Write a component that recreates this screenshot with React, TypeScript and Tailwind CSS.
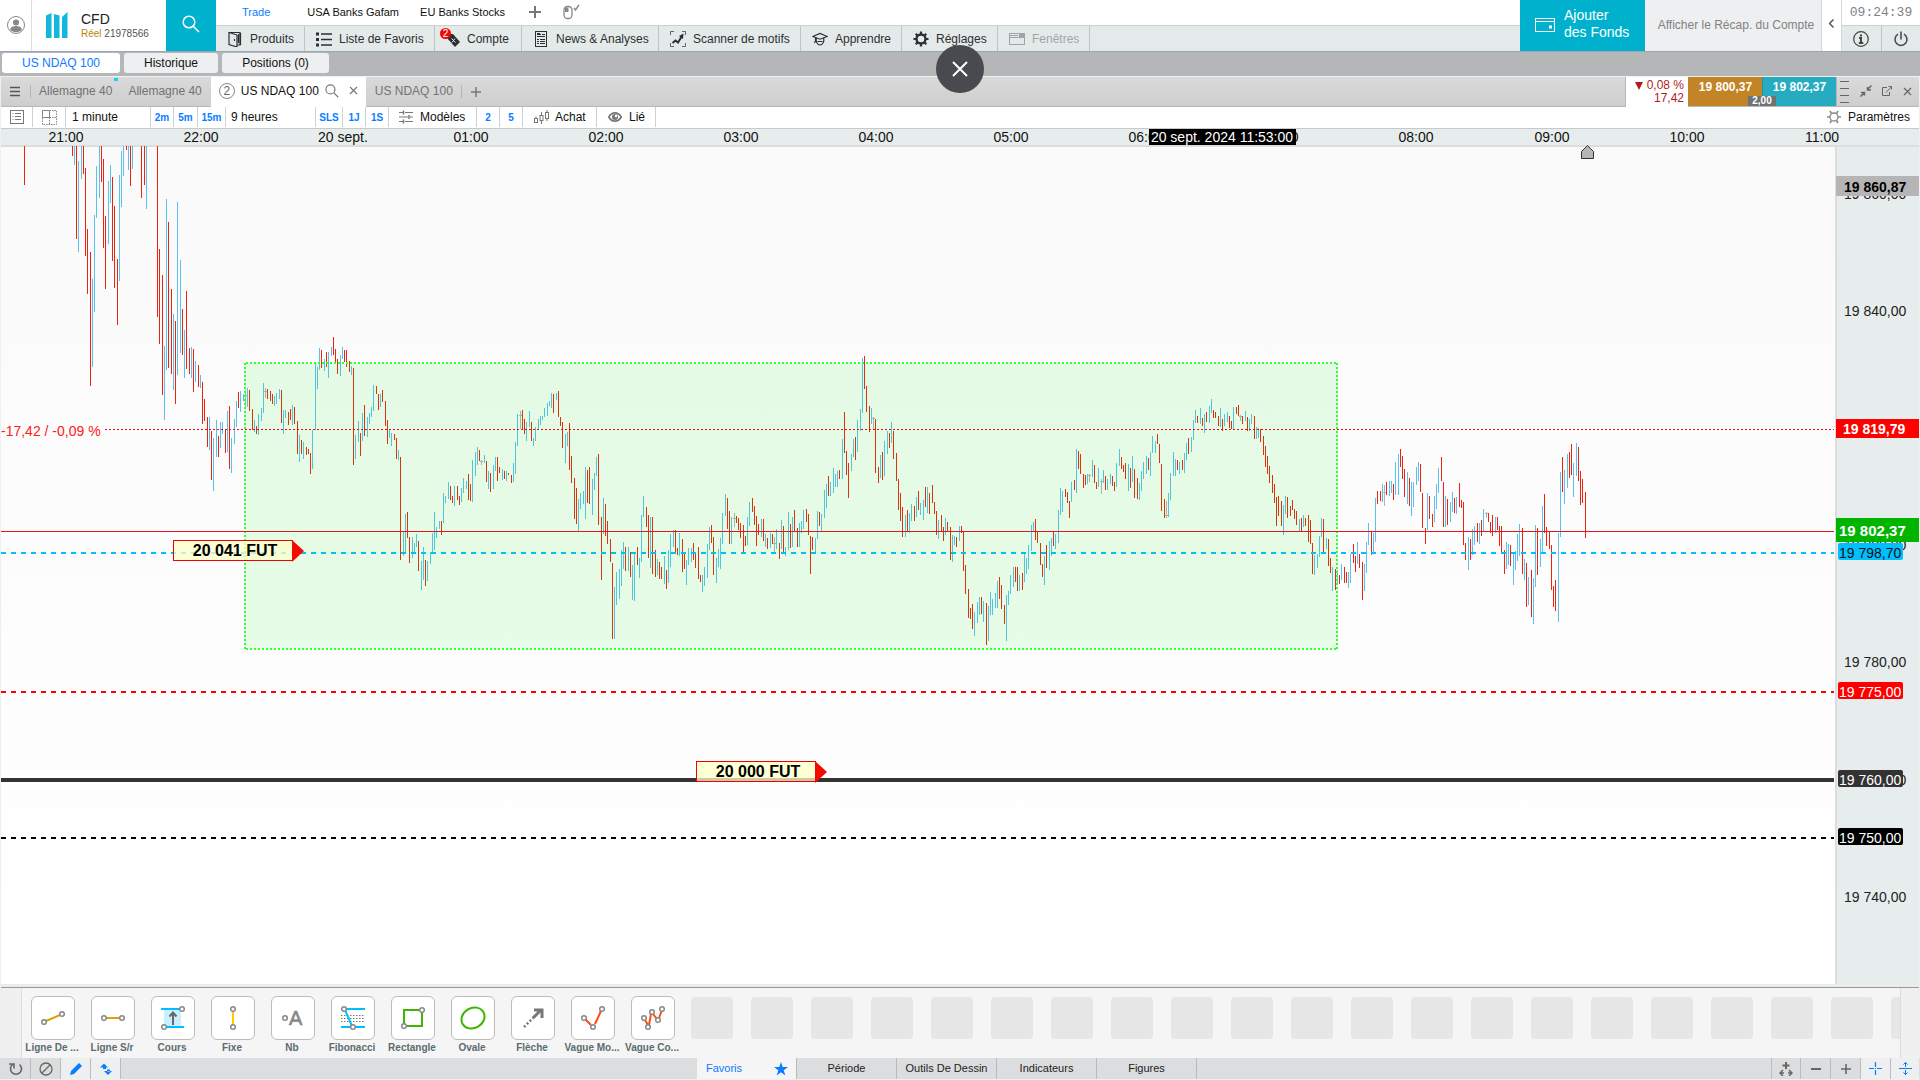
import React from 'react';

/* ------------------------------------------------------------------ */
/* Price data                                                          */
/* ------------------------------------------------------------------ */

// Each bar is "<kind><x> <top> <bottom> [tick]" in sub-units (3 per pixel) from its block's origin.
// r = down, b = up, g = unchanged (drawn with a small cross tick).
const BLOCKS: { x: number; y: number; bars: string }[] = [
  {
    x: 0,
    y: 140,
    bars:
      'r73 18 135,r217 18 47,b223 18 75,r229 18 297,b235 63 336,b244 18 117,r250 18 102,r256 84 348,r262 267 462,r271 336 738,b277 417 681,b283 225 516,b289 78 234,b298 18 174,r304 18 126,r310 57 324,r316 228 447,b325 123 312,b331 75 189,r337 111 363,r343 198 444,r352 357 555,b358 105 423,b364 33 201,b370 18 108,r379 18 30,b385 18 90,r391 18 138,b397 18 87,r424 18 174,r433 18 135,b439 18 207,r472 18 531,r478 327 612,r487 405 765,b493 618 840,b499 177 690,r505 246 684,r514 447 702,b520 522 750,r526 543 792,b532 186 705,b541 360 639,r547 507 645,b553 570 714,r559 453 687,r568 624 702,b574 621 714,r580 627 756,b586 663 726,r595 675 741,b601 705 744,r607 726 852,r613 777 843,r622 831 921,b628 831 930,r634 873 1020,b640 894 1053,b649 840 951,r655 888 951,b661 846 924,b667 846 882,r676 870 939,b682 813 936,r688 798 987,b694 894 999,b703 837 912,b709 783 861,r715 756 804,b721 753 816,b730 762 783,g736 750 800 767,b742 744 801,r748 750 813,r757 807 870,b763 840 876,r769 858 882,b775 822 885,b784 804 843,b790 729 819,g796 744 774 754,r802 747 777,r811 753 783,r817 762 792,b823 768 798,b829 759 792,b838 747 777,r844 750 849,b850 810 882,b856 810 834,r865 816 855,r871 807 840,b877 795 855,r883 801 852,r892 843 942,b898 885 966,r904 900 942,b910 906 957,r919 921 945,r925 927 942,r931 939 1002,b937 870 987,b946 672 870,b952 681 747,b958 624 690,r964 630 684,b973 657 693,r979 636 681,b985 636 714,b994 621 648,r1000 591 645,r1006 627 666,r1012 657 702,b1021 645 708,b1027 621 657,r1033 630 666,r1039 630 681,r1048 663 696,b1054 678 705,r1060 684 975,b1066 885 957,b1075 843 906,r1081 879 948,b1087 819 903,r1093 795 888,b1102 831 891,b1108 819 852,b1114 801 831,b1120 735 813,r1129 738 762,r1135 762 810,b1141 762 801,r1147 750 786,r1156 783 858,r1162 840 912,b1168 867 894,b1174 879 918,r1183 882 900,r1189 894 957,b1195 930 960,r1201 951 1260,b1210 1173 1248,b1216 1122 1239,r1222 1116 1194,r1228 1191 1269,b1237 1191 1254,b1243 1209 1239,b1249 1182 1221,r1255 1203 1293,b1264 1263 1350,b1270 1221 1321,r1276 1260 1338,b1282 1263 1323,b1291 1236 1272,b1297 1179 1242,b1303 1116 1230,b1309 1161 1194,b1318 1143 1167',
  },
  {
    x: 440,
    y: 340,
    bars:
      'r4 543 585,b10 459 549,b16 468 489,b25 426 477,r31 438 480,r37 468 489,b43 438 498,r52 438 480,r58 468 495,b64 444 486,b70 414 459,b79 423 447,r85 402 480,r91 432 483,b97 360 486,b106 336 408,b112 321 375,r118 330 363,g124 360 375 364,b133 345 369,r139 363 426,b145 393 447,r151 399 456,b160 375 447,b166 351 393,r172 351 423,r178 381 399,b187 387 420,r193 393 417,b199 393 423,r205 399 405,r214 405 429,b220 369 426,b226 306 402,b232 222 318,g241 213 267 226,r247 210 267,r253 237 282,b259 246 303,b268 213 261,r274 246 303,b280 294 318,b286 261 303,b295 237 270,b301 228 255,b307 228 240,b313 204 231,b322 189 228,b328 183 198,b334 159 204,r340 162 219,b349 159 180,r355 153 231,r361 231 258,r367 246 324,b376 282 369,b382 276 318,r388 249 390,r394 348 429,r403 414 537,r409 444 552,b415 477 573,b421 459 507,b430 453 492,b436 381 537,r442 390 489,r448 381 492,b457 417 525,b463 399 450,b469 351 408,r475 342 555,r484 531 720,b490 474 582,r496 492 588,r502 543 612,r511 597 666,r517 669 897,b523 741 897,b529 696 795,b538 687 777,b544 630 738,b550 606 687,r556 621 693,b565 621 693,r571 636 711,b577 675 780,b583 639 783,r592 621 675,b598 654 714,b604 525 666,b610 468 531,r619 501 561,r625 525 654,b631 531 684,r637 531 702,r646 630 711,b652 657 705,r658 666 717,r664 681 717,b673 648 732,r679 690 747,b685 630 729,b691 582 681,b700 570 621,r706 570 639,r712 624 645,b718 579 648,r727 597 696,r733 642 687,b739 660 735,b745 624 675,b754 624 666,r760 609 660,r766 642 684,r775 621 717,r781 705 726,b787 705 756,b793 681 738,b802 612 714,b808 561 630,r814 555 609,r820 591 705,b829 654 729,b835 627 681,b841 594 687,b847 519 612,b856 462 528,r862 474 567,r868 513 612,b874 531 612,g883 519 561 535,r889 528 549,r895 534 570,r901 549 594,r910 555 636,r916 588 618,b922 531 615,b928 486 558,r937 474 516,r943 498 555,r949 528 618,r955 552 585,b964 537 591,r970 537 603,b976 582 621,r982 594 627,b991 579 624,r997 582 612,g1003 591 636 609,b1009 567 627,r1018 609 657,b1024 540 627,r1030 558 639,b1036 621 648,b1045 516 630,r1051 552 624,b1057 531 621,r1063 510 573,r1072 564 621,b1078 549 621,b1084 543 579,b1090 510 567,r1099 507 546,r1105 522 585,r1111 588 702,r1117 591 630,b1126 594 639,b1132 513 597,r1138 516 558,b1144 522 573,b1153 450 534,b1159 432 504,r1165 408 468,b1171 426 468,b1180 384 459,b1186 402 441,b1192 393 441,r1198 390 417,b1207 297 417,r1213 216 339,r1219 333 405,r1225 369 474,b1234 342 393,b1240 297 351,r1246 291 360,b1252 240 336,b1261 207 273,b1267 54 219,r1273 48 147,r1279 138 216,r1288 198 276,b1294 204 252,g1300 231 270 235,r1306 237 399,r1315 381 429,b1321 345 414,r1327 336 420,b1333 303 408,b1342 273 342,r1348 279 324,b1354 246 309,r1360 273 357,r1369 339 423,r1375 417 510',
  },
  {
    x: 900,
    y: 340,
    bars:
      'r1 459 543,r7 501 591,b16 525 591,r22 510 573,b28 519 579,b34 492 543,r43 498 543,b49 471 531,r55 453 510,b61 489 525,b70 480 540,r76 441 501,b82 441 519,r88 459 522,r97 435 489,r103 486 522,r109 513 585,b115 540 597,r124 525 573,r130 561 603,b136 534 585,r142 546 573,r151 561 660,b157 585 666,b163 588 615,r169 591 621,b178 558 603,r184 558 579,r190 576 693,r196 675 762,r205 747 834,r211 804 837,r217 792 867,b223 816 888,b232 786 849,b238 771 825,r244 771 822,b250 783 846,r259 789 915,b265 798 903,b271 756 825,b277 777 825,b286 759 804,b292 723 804,r298 711 777,r304 735 807,r313 795 852,b319 765 903,b325 753 795,b331 705 762,b340 681 741,r346 681 726,r352 681 753,b358 705 753,r367 699 750,b373 639 726,b379 654 702,b385 615 687,b394 555 633,b400 546 573,r406 537 600,r412 576 609,r421 609 675,r427 672 711,b433 648 735,r439 615 684,b448 603 690,b454 594 648,r460 573 618,b466 582 627,b475 510 609,b481 444 525,b487 453 516,r496 447 471,r502 456 489,r508 483 534,b514 426 486,r523 420 450,b529 327 459,r535 333 387,r541 342 402,r550 402 444,r556 405 435,b562 402 432,g568 402 426 406,b577 360 411,r583 375 429,r589 426 447,b595 384 441,g604 417 462 424,b610 390 429,r616 408 450,b622 417 450,b631 402 432,r637 408 438,r643 426 453,b649 369 441,b658 327 378,r664 351 387,r670 375 396,r676 369 417,b685 372 453,r691 384 444,b697 348 426,r703 387 474,r712 414 477,b718 429 480,b724 393 453,b730 366 417,b739 348 402,r745 354 390,b751 336 408,b757 288 339,b766 303 339,r772 282 312,r778 312 369,r784 372 513,r793 477 534,g799 483 534 526,b805 459 531,b811 399 480,b820 336 408,b826 357 408,r832 360 390,b838 366 402,r847 360 390,b853 339 399,b859 309 360,r865 294 342,b874 291 336,b880 240 300,b886 210 249,r892 228 249,b901 204 252,r907 234 258,b913 222 279,r919 216 246,b928 198 249,b934 177 219,r940 210 234,r946 216 234,r955 228 258,b961 204 261,r967 237 273,b973 222 258,b982 216 246,r988 228 264,r994 243 267,b1000 201 270,r1009 201 222,r1015 195 228,g1021 225 243 229,r1027 228 252,b1036 213 243,r1042 231 273,b1048 237 273,b1054 222 252,r1063 228 297,b1069 261 297,b1075 264 294,r1081 267 306,r1090 288 345,r1096 318 381,r1102 348 402,r1108 378 429,r1117 405 459,r1123 432 489,r1129 471 558,r1135 468 528,r1144 483 558,b1150 495 585,b1156 468 522,r1162 471 534,r1171 498 528,r1177 480 510,r1183 507 537,r1189 513 555,b1198 537 573,r1204 534 573,b1210 525 561,r1216 534 558',
  },
  {
    x: 1300,
    y: 400,
    bars:
      'r25 345 426,r31 360 432,r37 429 522,b43 465 525,b52 462 504,b58 408 471,b64 354 411,r70 357 459,b79 414 447,r85 417 498,r91 474 519,b97 501 573,r106 507 570,b112 510 550,r118 525 552,b124 492 540,r133 501 549,r139 516 549,b145 516 564,b151 462 549,r160 432 489,r166 468 516,b172 426 492,r178 462 504,r187 486 600,b193 492 573,b199 426 519,b205 369 435,r214 393 465,b220 399 462,b226 294 426,r232 273 312,r241 273 303,b247 252 306,g253 255 318 277,r259 246 285,b268 243 288,b274 243 279,r280 252 300,b286 186 285,b295 162 285,r301 147 201,r307 168 237,r313 207 291,b322 216 312,r328 234 318,b334 246 348,b340 246 321,b349 201 255,b355 186 243,r361 192 276,r367 279 384,r376 384 432,b382 279 390,r388 288 357,r397 342 381,b403 288 366,b409 252 327,b415 204 279,r424 171 243,r430 246 381,b436 288 381,r442 297 375,b451 306 366,b457 276 336,r463 294 339,b469 291 342,r478 249 321,r484 300 324,r490 306 435,r496 429 480,b505 411 510,r511 417 480,b517 387 465,b523 378 435,r532 369 426,b538 369 432,r544 360 408,b550 327 396,g559 336 354 340,r565 339 366,r571 366 399,r577 345 408,b586 351 399,r592 351 390,r598 378 438,r604 378 462,r613 450 522,b619 426 507,b625 432 495,r631 435 498,b640 459 555,b646 453 510,b652 402 483,b658 372 468,r667 384 522,b673 477 540,r679 489 621,b685 531 615,r694 510 651,b700 534 672,b706 375 561,r712 384 525,b721 417 501,b727 318 456,r733 282 399,r739 381 438,r748 396 447,r754 435 570,r760 558 621,r766 540 633,b775 399 666,b781 216 411,r787 171 276,b793 210 312,b802 162 264,r808 156 234,r814 132 225,b820 189 291,b829 129 228,r835 141 243,r841 213 315,r847 237 309,r856 276 414',
  },
];

const BAR_COLORS: Record<string, string> = { r: '#ee2211', b: '#5cc0ee', g: '#b4b4b4' };

const BARS = BLOCKS.flatMap((block) =>
  block.bars.split(',').map((entry) => {
    const [x, top, bottom, tick] = entry.slice(1).split(' ').map(Number);
    return {
      color: BAR_COLORS[entry[0]],
      x: block.x + Math.floor(x / 3),
      y: block.y + Math.round(top / 3),
      h: Math.max(1, Math.round((bottom - top) / 3)),
      tick: tick === undefined ? null : block.y + Math.floor(tick / 3),
    };
  }),
);

/* ------------------------------------------------------------------ */
/* Icons                                                               */
/* ------------------------------------------------------------------ */

type IconProps = { children: React.ReactNode; w?: number; h?: number; className?: string };

function Svg({ children, w = 16, h = 16, className = '' }: IconProps) {
  return (
    <svg
      width={w}
      height={h}
      viewBox={`0 0 ${w} ${h}`}
      fill="none"
      stroke="currentColor"
      className={`shrink-0 ${className}`}
      aria-hidden="true"
    >
      {children}
    </svg>
  );
}

const BookIcon = () => (
  <Svg>
    <path d="M2 1.5h11v12.5h-3M10 4v12L2 13.5V1.5L10 4M11.5 3v9" strokeWidth="1.2" />
    <path d="M13.5 2v12M7.500 8v2" strokeWidth="1.200" />
  </Svg>
);
const ListIcon = () => (
  <Svg>
    <path d="M5 3h11M5 8.500h11M5 14h11" strokeWidth="1.5" />
    <path d="M0 3h3M0 8.500h3M0 14h3" strokeWidth="3" />
  </Svg>
);
const TagIcon = () => (
  <Svg className="-ml-0.5">
    <path d="M3 3h6l7 8-5 5-8-9z" fill="currentColor" stroke="none" />
    <path d="M7.500 7.500l4 4M11 7.500l-3 4" stroke="#e4eae9" />
  </Svg>
);
const NewsIcon = () => (
  <Svg>
    <rect x="2.500" y="0.500" width="11" height="15" />
    <path d="M4 3.500h4M9 3.500h3M4 5.500h8M4 8.500h2M7 8.500h5M4 10.500h2M7 10.500h5M4 12.500h2M7 12.500h5" />
    <path d="M4 3h3" strokeWidth="2" />
  </Svg>
);
const ScanIcon = () => (
  <Svg>
    <path d="M.5 4V.5H4M12 .5h3.500V4M.5 12v3.500H4M12 15.500h3.500V12" opacity=".7" />
    <path d="M2.500 12l3-2.500 2.500 2 4-6.500" strokeWidth="2" />
    <path d="M9 5l4.500-2.500L13 8z" fill="currentColor" stroke="none" />
  </Svg>
);
const LearnIcon = () => (
  <Svg>
    <path d="M.8 5.500L8 2.500l7.200 3L8 8.200zM3.500 7v3M4.500 7c-1 3 .5 7 3.500 7s4.500-4 3.500-7M5.500 10.500h5M3.500 10l-1 2" strokeWidth="1.200" />
  </Svg>
);
const GearIcon = () => (
  <Svg>
    <circle cx="8" cy="8" r="4.500" strokeWidth="2.400" />
    <path d="M8 .5v3M8 12.500v3M.5 8h3M12.500 8h3M2.700 2.700l2 2M11.300 11.300l2 2M2.700 13.300l2-2M11.300 4.700l2-2" strokeWidth="2.200" />
  </Svg>
);
const WindowIcon = () => (
  <Svg>
    <rect x=".5" y="2.500" width="15" height="11" />
    <path d="M1 4.500h8M1 6.500h14" />
    <path d="M10 4.500h5" strokeWidth="3" />
  </Svg>
);
const Magnifier = ({ size, width = 1 }: { size: number; width?: number }) => (
  <svg width={size} height={size} viewBox="0 0 18 18" fill="none" stroke="currentColor" strokeWidth={width} className="shrink-0" aria-hidden="true">
    <circle cx="7" cy="7" r="5.800" />
    <path d="M11.200 11.200L17 17" />
  </svg>
);
const CrossIcon = ({ size, width }: { size: number; width: number }) => (
  <Svg w={size} h={size}>
    <path d={`M1 1L${size - 1} ${size - 1}M${size - 1} 1L1 ${size - 1}`} strokeWidth={width} />
  </Svg>
);

/* ------------------------------------------------------------------ */
/* Header                                                              */
/* ------------------------------------------------------------------ */

const MENU = [
  { label: 'Produits', icon: <BookIcon />, width: 'w-[89px]' },
  { label: 'Liste de Favoris', icon: <ListIcon />, width: 'w-[130px]' },
  { label: 'Compte', icon: <TagIcon />, badge: '2', width: 'w-[87px]' },
  { label: 'News & Analyses', icon: <NewsIcon />, width: 'w-[137px]' },
  { label: 'Scanner de motifs', icon: <ScanIcon />, width: 'w-[142px]' },
  { label: 'Apprendre', icon: <LearnIcon />, width: 'w-[101px]' },
  { label: 'Réglages', icon: <GearIcon />, width: 'w-24' },
  { label: 'Fenêtres', icon: <WindowIcon />, disabled: true, width: 'w-[92px]' },
];

function Header() {
  return (
    <header className="relative flex h-[52px] shrink-0 border-b border-[#9aa5b5] bg-white">
      <button aria-label="Profil" className="flex w-8 items-center justify-center border-r border-[#ddd] pb-0.5 text-[#85888b]">
        <Svg w={20} h={20}>
          <circle cx="10" cy="10" r="8.500" />
          <circle cx="10" cy="7.500" r="3" fill="currentColor" stroke="none" />
          <path d="M4 14.500c1-3 3-3.500 6-3.500s5 .5 6 3.500c-3 3.500-9 3.500-12 0z" fill="currentColor" stroke="none" />
        </Svg>
      </button>
      <div className="flex w-[134px] items-center pb-0.5 pl-3.5">
        <svg width="22" height="26" viewBox="0 0 22 26" fill="#12b8dc" aria-hidden="true">
          <path d="M0 3.500L5.500 1v25H0zM8 2l5.500 1.500V26H8zM16 5l5.500-5v26H16z" />
        </svg>
        <div className="ml-[13px] leading-4 text-[#222]">
          <div className="text-sm leading-[18px]">CFD</div>
          <div className="text-[10px] leading-3 text-[#555]">
            <span className="text-[#b8860b]">Réel</span> 21978566
          </div>
        </div>
      </div>
      <button aria-label="Rechercher" className="flex w-[50px] items-center justify-center bg-[#00b1cd] pb-1 text-white">
        <Magnifier size={18} width={1.500} />
      </button>
      <div className="flex min-w-0 flex-1 flex-col">
        <nav aria-label="Espaces" className="flex h-[25px] items-center pb-px text-[11px] text-[#111]">
          <button className="ml-[26px] text-[#0a7cff]">Trade</button>
          <button className="ml-[37px]">USA Banks Gafam</button>
          <button className="ml-[21px]">EU Banks Stocks</button>
          <button aria-label="Ajouter un espace" className="ml-6 text-[#777]">
            <Svg w={12} h={12}>
              <path d="M6 0v12M0 6h12" strokeWidth="2" />
            </Svg>
          </button>
          <button aria-label="Mode souris" className="ml-[22px] text-[#888]">
            <Svg w={18} h={16}>
              <rect x="1" y="2.500" width="8" height="12" rx="3.500" strokeWidth="1.300" />
              <path d="M2 3.500h3.500V8H2z" fill="currentColor" stroke="none" />
              <path d="M11 4l1.500 2L16 .8" strokeWidth="1.500" />
            </Svg>
          </button>
        </nav>
        <nav aria-label="Menu principal" className="flex flex-1 border-t border-[#ccd0d0] bg-[#e4eae9] text-xs text-[#2d2f31]">
          {MENU.map((m) => (
            <button
              key={m.label}
              disabled={m.disabled}
              className={`relative flex items-center gap-[7px] border-r border-[#bfc4c4] pl-[11px] whitespace-nowrap disabled:text-[#a2a5a5] ${m.width}`}
            >
              {m.icon}
              {m.badge && (
                <span className="absolute top-0.5 left-[5px] size-[11px] rounded-full bg-[#f10707] text-[10px] leading-[11px] text-white">
                  {m.badge}
                </span>
              )}
              {m.label}
            </button>
          ))}
        </nav>
      </div>
      <button className="flex w-[125px] items-center gap-[9px] bg-[#00b1cd] pb-[3px] pl-[15px] text-left text-sm leading-[17px] text-white">
        <Svg w={20} h={16} className="mt-px">
          <rect x=".5" y="1.500" width="19" height="13" />
          <path d="M1 4.500h18" />
          <path d="M14 10h3" strokeWidth="3" />
        </Svg>
        <span>
          Ajouter
          <br />
          des Fonds
        </span>
      </button>
      <button className="w-[177px] border-r border-[#d5d7d8] bg-[#eeeff0] pb-0.5 pl-1.5 text-xs text-[#808284]">Afficher le Récap. du Compte</button>
      <button aria-label="Replier" className="flex w-[19px] items-center justify-center pb-1 text-[#555]">
        <Svg w={5} h={9}>
          <path d="M4.500 .5l-4 4 4 4" strokeWidth="1.500" />
        </Svg>
      </button>
      <div className="flex w-[79px] flex-col border-l border-[#d5d7d8]">
        <time className="h-[25px] text-center font-['Liberation_Mono'] text-[13px] leading-[26px] text-[#808284]">09:24:39</time>
        <div className="flex flex-1 border-t border-[#ccd0d0] bg-[#e4eae9] text-[#444]">
          <button aria-label="Informations" className="flex flex-1 items-center justify-center border-r border-[#bfc4c4]">
            <Svg>
              <circle cx="8" cy="8" r="7.300" strokeWidth="1.200" />
              <path d="M8 3.500v2M6 7h2v4.500M5.800 12h4.500" strokeWidth="2" />
            </Svg>
          </button>
          <button aria-label="Déconnexion" className="flex flex-1 items-center justify-center">
            <Svg>
              <path d="M5 3.200a6 6 0 1 0 6 0M8 .5v8" strokeWidth="1.500" />
            </Svg>
          </button>
        </div>
      </div>
      <button
        aria-label="Fermer"
        className="absolute top-[45px] left-1/2 z-10 flex size-12 -translate-x-1/2 items-center justify-center rounded-full bg-[#484a50] text-white"
      >
        <CrossIcon size={16} width={2} />
      </button>
    </header>
  );
}

/* ------------------------------------------------------------------ */
/* Tabs                                                                */
/* ------------------------------------------------------------------ */

function PageTabs() {
  return (
    <nav aria-label="Pages" className="flex h-6 shrink-0 gap-1 bg-[#b5b6b8] pt-px pb-[3px] pl-0.5 text-xs leading-[19px] text-[#111]">
      <button className="w-[118px] rounded-[3px] bg-white text-[#0a7cff]">US NDAQ 100</button>
      <button className="w-[94px] rounded-[3px] bg-[#eeeff0]">Historique</button>
      <button className="w-[107px] rounded-[3px] bg-[#eeeff0]">Positions (0)</button>
    </nav>
  );
}

function ChartTabs() {
  return (
    <div className="mx-px flex h-[31px] shrink-0 border-t border-b border-t-[#f0f0f0] border-b-[#b8b8b8] bg-linear-to-b from-[#dadada] to-[#cecece] text-xs text-[#707274]">
      <button aria-label="Menu" className="my-2 flex w-[30px] items-center justify-center border-r border-[#b4b4b4] pr-px text-[#555]">
        <Svg w={10} h={11}>
          <path d="M0 1.500h10M0 5.500h10M0 9.500h10" strokeWidth="1.500" />
        </Svg>
      </button>
      <button className="relative pr-4 pb-0.5 pl-2">
        Allemagne 40
        <span className="absolute top-px right-[10px] h-[3px] w-1 bg-[#0cd8ff]" />
      </button>
      <button className="pr-[9px] pb-0.5">Allemagne 40</button>
      <div className="-mb-px flex w-[155px] items-center bg-white pb-[3px] pl-2 text-[#111]">
        <span className="flex size-4 items-center justify-center rounded-full border border-[#888] text-xs leading-3 text-[#666]">2</span>
        <span className="ml-1.5">US NDAQ 100</span>
        <button aria-label="Rechercher un marché" className="ml-1.5 text-[#777]">
          <Magnifier size={14} width={1.500} />
        </button>
        <button aria-label="Fermer l'onglet" className="ml-2.5 text-[#777]">
          <CrossIcon size={9} width={1.200} />
        </button>
      </div>
      <button className="pr-2 pb-0.5 pl-[9px]">US NDAQ 100</button>
      <button aria-label="Nouvel onglet" className="my-2 flex w-[30px] items-center justify-center border-l border-[#b4b4b4] text-[#777]">
        <Svg w={10} h={10}>
          <path d="M5 0v10M0 5h10" strokeWidth="1.500" />
        </Svg>
      </button>
      <div className="flex-1" />
      <div className="-mb-px flex w-[63px] flex-col justify-center border-l border-[#b8b8b8] bg-white pr-1 text-right leading-[13px] text-[#b31b1b]">
        <span className="flex items-center justify-end gap-1">
          <span className="size-0 border-x-[4px] border-t-[8px] border-x-transparent border-t-[#b31b1b]" />
          0,08 %
        </span>
        <span>17,42</span>
      </div>
      <div className="relative flex w-[148px] font-bold text-white">
        <button className="flex-1 bg-[#c28426] pb-2.5 pl-px leading-5">19 800,37</button>
        <button className="flex-1 border-l border-[#1e93a5] bg-[#26abc1] pb-2.5 leading-5">19 802,37</button>
        <span className="absolute bottom-0 left-[60px] w-7 bg-[#6f7375] text-center text-[10px] leading-[10px]">2,00</span>
      </div>
      <div className="flex w-[83px] items-center justify-between border-l border-[#b8b8b8] pr-[7px] pb-px pl-[3px] text-[#666]">
        <Svg w={9} h={27}>
          <path d="M0 3.500h9M0 10.500h9M0 17.500h9M0 24.500h9" />
        </Svg>
        <button aria-label="Réduire">
          <Svg w={12} h={12}>
            <path d="M7.500 2v3H11M11.500 .5l-4 4M1 7.500h3.500v3M4.500 7.500l-4 4" strokeWidth="1.500" />
          </Svg>
        </button>
        <button aria-label="Détacher">
          <Svg w={10} h={10}>
            <path d="M5 1.500H.5v8h7V6M4 6.500L9.500 .8M6.500 .5h3v3" />
          </Svg>
        </button>
        <button aria-label="Fermer le graphique">
          <CrossIcon size={9} width={1.200} />
        </button>
      </div>
    </div>
  );
}

const TOOL = 'flex items-center border-r border-[#d0d2d2]';
const SHORTCUT = 'border-r border-[#d0d2d2] pt-px text-center text-[10px] font-bold text-[#0a7cff]';

function Toolbar() {
  return (
    <div className="mx-px flex h-[22px] shrink-0 border-b border-[#c6caca] bg-white pb-px text-xs text-[#111]">
      <button aria-label="Liste" className={`${TOOL} w-8 justify-center text-[#777]`}>
        <Svg w={14} h={14}>
          <rect x=".5" y=".5" width="13" height="13" />
          <path d="M5 3.500h6M5 6.500h6M5 9.500h6M2.500 3.500h1M2.500 6.500h1M2.500 9.500h1" />
        </Svg>
      </button>
      <button aria-label="Disposition" className={`${TOOL} w-[33px] justify-center text-[#888]`}>
        <Svg w={15} h={15}>
          <path d="M.5 .5h7v7h-7z" />
          <path d="M7.500 .5h7v14h-14v-7M7.500 7.500v7M7.500 7.500h7" strokeDasharray="1.500 1" />
        </Svg>
      </button>
      <button className={`${TOOL} w-[85px] pl-1.5`}>1 minute</button>
      <button className={`${SHORTCUT} w-[23px]`}>2m</button>
      <button className={`${SHORTCUT} w-6`}>5m</button>
      <button className={`${SHORTCUT} w-7`}>15m</button>
      <button className={`${TOOL} w-[90px] pl-[5px]`}>9 heures</button>
      <button className={`${SHORTCUT} w-[27px]`}>SLS</button>
      <button className={`${SHORTCUT} w-[23px]`}>1J</button>
      <button className={`${SHORTCUT} w-[23px]`}>1S</button>
      <button className={`${TOOL} w-[88px] gap-[7px] pl-2.5`}>
        <Svg w={14} h={14} className="text-[#777]">
          <path d="M0 2.500h4M6 2.500h8M0 7h9M11 7h3M0 11.500h4M6 11.500h8" />
          <path d="M4.500 .5v4M10 5v4M4.500 9.500v4" strokeWidth="1.500" />
        </Svg>
        Modèles
      </button>
      <button className={`${SHORTCUT} w-[23px]`}>2</button>
      <button className={`${SHORTCUT} w-[23px]`}>5</button>
      <button className={`${TOOL} w-[74px] gap-1.5 pl-[11px]`}>
        <Svg w={15} h={14} className="text-[#777]">
          <rect x=".5" y="8.500" width="3" height="4" />
          <rect x="6" y="5.500" width="3" height="5" />
          <rect x="11.500" y="2.500" width="3" height="6" />
          <path d="M2 6.500v2M7.500 2v3.500M7.500 10.500V14M13 0v2.500M13 8.500V11" />
        </Svg>
        Achat
      </button>
      <button className={`${TOOL} w-[59px] gap-[7px] pl-[11px]`}>
        <Svg w={14} h={12} className="text-[#777]">
          <path d="M.8 6c3-5.500 9.400-5.500 12.400 0-3 5.500-9.400 5.500-12.400 0z" strokeWidth="1.600" />
          <circle cx="7" cy="6" r="3" fill="currentColor" stroke="none" />
          <circle cx="8" cy="5" r="1.200" fill="#fff" stroke="none" />
        </Svg>
        Lié
      </button>
      <button className="ml-auto flex items-center gap-[7px] pr-[9px]">
        <Svg w={14} h={14} className="text-[#888]">
          <circle cx="7" cy="7" r="4" strokeWidth="1.300" />
          <path d="M0 7h3M11 7h3M3 1l1.500 2.500M11 1L9.500 3.500M3 13l1.500-2.500M11 13l-1.500-2.500" strokeWidth="1.500" />
        </Svg>
        Paramètres
      </button>
    </div>
  );
}

/* ------------------------------------------------------------------ */
/* Chart                                                               */
/* ------------------------------------------------------------------ */

const HOURS: [number, string][] = [
  [65, '21:00'],
  [200, '22:00'],
  [342, '20 sept.'],
  [470, '01:00'],
  [605, '02:00'],
  [740, '03:00'],
  [875, '04:00'],
  [1010, '05:00'],
  [1145, '06:00'],
  [1280, '07:00'],
  [1415, '08:00'],
  [1551, '09:00'],
  [1686, '10:00'],
  [1821, '11:00'],
];

function TimeAxis() {
  return (
    <div className="mx-px h-[18px] shrink-0 border-b-2 border-[#dcdedd] bg-[#e7edec]">
      <svg className="block h-4 w-full overflow-hidden text-sm" aria-label="Axe du temps" role="img">
        <g fill="#111" textAnchor="middle">
          {HOURS.map(([x, label]) => (
            <text key={label} x={x} y="13">
              {label}
            </text>
          ))}
        </g>
        <rect x="1148" width="147" height="16" fill="#000" />
        <text x="1221" y="13" fill="#fff" textAnchor="middle">
          20 sept. 2024 11:53:00
        </text>
      </svg>
    </div>
  );
}

function Flag({ x, y, label }: { x: number; y: number; label: string }) {
  return (
    <g>
      <rect x={x + 0.5} y={y + 0.5} width="119" height="20" fill="#ffffc8" fillOpacity=".75" stroke="#f00000" />
      <path d={`M${x + 119} ${y}l12 11-12 11z`} fill="#f50a00" />
      <text x={x + 62} y={y + 16} textAnchor="middle" fontSize="16" fontWeight="bold" fill="#000">
        {label}
      </text>
    </g>
  );
}

function Plot() {
  return (
    <svg className="block size-full overflow-visible" aria-label="US NDAQ 100, 1 minute" role="img">
      <g transform="translate(-1 -147)">
        <g shapeRendering="crispEdges">
          {BARS.map((b, i) => (
            <g key={i} fill={b.color}>
              <rect x={b.x} y={b.y} width="1" height={b.h} />
              {b.tick !== null && <rect x={b.x - 1} y={b.tick} width="3" height="1" />}
            </g>
          ))}
          <line x1="1" x2="100%" y1="553" y2="553" stroke="#00bfff" strokeWidth="2" strokeDasharray="5 5" />
          <rect x="245" y="363" width="1092" height="286" fill="#00f000" fillOpacity=".088" />
          <path d="M246 363H1336M246 649H1336" stroke="#33ff33" strokeWidth="2" strokeDasharray="2 2" />
          <path d="M245 363V650M1337 363V650" stroke="#33ff33" strokeWidth="2" strokeDasharray="2 2" />
          <line x1="105" x2="100%" y1="429.500" y2="429.500" stroke="#e60a0a" strokeDasharray="2 2" />
          <line x1="1" x2="100%" y1="531.500" y2="531.500" stroke="#e01818" />
          <line x1="1" x2="100%" y1="692" y2="692" stroke="#ff0000" strokeWidth="2" strokeDasharray="5 5" />
          <line x1="1" x2="100%" y1="780" y2="780" stroke="#333333" strokeWidth="4" />
          <line x1="1" x2="100%" y1="838" y2="838" stroke="#000" strokeWidth="2" strokeDasharray="5 5" />
        </g>
        <text x="1" y="436" fontSize="14" fill="#ff2020">
          -17,42 / -0,09 %
        </text>
        <Flag x={173} y={540} label="20 041 FUT" />
        <Flag x={696} y={761} label="20 000 FUT" />
        <path d="M1581.500 158.500v-7l6-6 6 6v7z" fill="#b5b5b5" stroke="#333" />
      </g>
    </svg>
  );
}

const PRICES: [number, string][] = [
  [194, '19 860,00'],
  [311, '19 840,00'],
  [545, '19 800,00'],
  [662, '19 780,00'],
  [780, '19 760,00'],
  [897, '19 740,00'],
];

const LEVELS: { y: number; label: string; fill: string; color: string }[] = [
  { y: 543, label: '19 798,70', fill: '#00bfff', color: '#111' },
  { y: 682, label: '19 775,00', fill: '#ff0000', color: '#fff' },
  { y: 770, label: '19 760,00', fill: '#333333', color: '#fff' },
  { y: 828, label: '19 750,00', fill: '#000000', color: '#fff' },
];

function PriceAxis() {
  return (
    <svg className="block h-full w-[82px] shrink-0 overflow-visible text-sm" aria-label="Axe des prix" role="img">
      <g transform="translate(0 -147)">
        {PRICES.map(([y, label]) => (
          <text key={label} x="7" y={y + 5} fill="#222">
            {label}
          </text>
        ))}
        <rect x="-1" y="176" width="83" height="20" fill="#b5b5b5" />
        <text x="7" y="192" fontWeight="bold" fill="#000">
          19 860,87
        </text>
        <rect x="-1" y="419" width="83" height="19" fill="#ff0000" />
        <text x="6" y="434" fontWeight="bold" fill="#fff">
          19 819,79
        </text>
        {LEVELS.map((l) => (
          <g key={l.label}>
            <rect x="1" y={l.y} width="65" height="17" rx="2" fill={l.fill} />
            <text x="2" y={l.y + 15} fill={l.color}>
              {l.label}
            </text>
          </g>
        ))}
        <rect x="-1" y="518" width="83" height="24" fill="#00b400" />
        <text x="2" y="536" fontSize="15" fontWeight="bold" fill="#fff">
          19 802,37
        </text>
      </g>
    </svg>
  );
}

/* ------------------------------------------------------------------ */
/* Drawing palette                                                     */
/* ------------------------------------------------------------------ */

const Dot = ({ x, y }: { x: number; y: number }) => <circle cx={x} cy={y} r="2.300" fill="#fff" stroke="#888" strokeWidth="1.500" />;

const DRAWINGS: { label: string; art: React.ReactNode }[] = [
  { label: 'Ligne De ...', art: <><path d="M6 18L20 12" stroke="#dfa000" strokeWidth="2" /><Dot x={4} y={19} /><Dot x={22} y={11} /></> },
  { label: 'Ligne S/r', art: <><path d="M6 15h13" stroke="#dfa000" strokeWidth="2" /><Dot x={4} y={15} /><Dot x={22} y={15} /></> },
  {
    label: 'Cours',
    art: (
      <>
        <path d="M4 6h17v18H4z" fill="#c9efff" stroke="none" />
        <path d="M1 6h19M6 24h18" stroke="#00bfff" strokeWidth="2" />
        <path d="M13 22V10M9.500 13.500L13 9.500l3.500 4" stroke="#666" strokeWidth="2" />
        <Dot x={22} y={6} />
        <Dot x={4} y={24} />
      </>
    ),
  },
  { label: 'Fixe', art: <><path d="M13 8v13" stroke="#ffcc00" strokeWidth="2" /><Dot x={13} y={6} /><Dot x={13} y={24} /></> },
  {
    label: 'Nb',
    art: (
      <>
        <text x="9" y="22" fontSize="20" fill="#888" stroke="#888" strokeWidth=".6">A</text>
        <Dot x={5} y={15} />
      </>
    ),
  },
  {
    label: 'Fibonacci',
    art: (
      <>
        <path d="M1 12.500h24M1 15.500h24M1 18.500h24" stroke="#777" strokeDasharray="1.500 1.500" />
        <path d="M7 6h18M1 24h24M5 7l7 16" stroke="#00bfff" strokeWidth="2" />
        <Dot x={4} y={6} />
        <Dot x={13} y={24} />
      </>
    ),
  },
  { label: 'Rectangle', art: <><path d="M4 7h18v16H4z" stroke="#3fb500" strokeWidth="2" /><Dot x={22} y={7} /><Dot x={4} y={23} /></> },
  { label: 'Ovale', art: <ellipse cx="13" cy="15" rx="12" ry="10" transform="rotate(-30 13 15)" stroke="#3fb500" strokeWidth="2" /> },
  {
    label: 'Flèche',
    art: (
      <>
        <path d="M4 24l9-9" stroke="#777" strokeWidth="2.500" strokeDasharray="2 2" />
        <path d="M13 15l8-8M14 7h8v8" stroke="#777" strokeWidth="3" />
      </>
    ),
  },
  { label: 'Vague Mo...', art: <><path d="M5 16l6 6M15 21l6-13" stroke="#ff4d10" strokeWidth="2" /><Dot x={4} y={15} /><Dot x={13} y={24} /><Dot x={22} y={6} /></> },
  {
    label: 'Vague Co...',
    art: (
      <>
        <path d="M5 17l3 5M9 22l2-11M13 11l4 5M19 15l3-8" stroke="#ff4d10" strokeWidth="2" />
        <Dot x={4} y={15} />
        <Dot x={8} y={24} />
        <Dot x={12} y={9} />
        <Dot x={18} y={17} />
        <Dot x={22} y={6} />
      </>
    ),
  },
];

function Palette() {
  return (
    <div className="mx-px flex h-[71px] shrink-0 border-t border-[#999] bg-[#f0f0f0]">
      <div className="ml-5 flex flex-1 overflow-hidden border-x border-[#ddd] bg-[#f5f5f5]">
        {DRAWINGS.map((d) => (
          <button key={d.label} className="flex w-[60px] shrink-0 flex-col items-center pt-2">
            <span className="ml-0.5 flex size-11 items-center justify-center rounded-md border border-[#bcbcbc] bg-white">
              <Svg w={26} h={30}>{d.art}</Svg>
            </span>
            <span className="text-[10px] leading-4 font-bold whitespace-nowrap text-[#5c6b6e]">{d.label}</span>
          </button>
        ))}
        {Array.from({ length: 21 }, (_, i) => (
          <div key={i} className="w-[60px] shrink-0 pt-[9px] pl-[9px]">
            <div className="size-[42px] rounded-sm bg-[#e6e6e6]" />
          </div>
        ))}
      </div>
      <div className="w-[18px]" />
    </div>
  );
}

const CELL = 'flex w-[30px] items-center justify-center border-r border-[#bcbcbc]';
const SECTION = 'w-[100px] border-r border-[#b8babb]';

function BottomBar() {
  return (
    <footer className="flex h-[22px] shrink-0 border-b border-[#f0f0f0] bg-[#dcddde] pr-px pl-px text-[11px] text-[#222]">
      <div className="flex flex-1 text-[#666]">
        <button aria-label="Réinitialiser" className={CELL}>
          <Svg w={14} h={14}>
            <path d="M3.500 2.500a5.500 5.500 0 1 0 7 0M0 2h5v4.500" strokeWidth="1.600" />
          </Svg>
        </button>
        <button aria-label="Effacer" className={CELL}>
          <Svg w={14} h={14}>
            <circle cx="7" cy="7" r="6" strokeWidth="1.300" />
            <path d="M3 11l8-8" strokeWidth="1.300" />
          </Svg>
        </button>
        <button aria-label="Dessiner" className={`${CELL} bg-[#eeeff0] text-[#0a7cff]`}>
          <Svg w={14} h={14}>
            <path d="M1 13l1-4 8-8 3 3-8 8z" fill="currentColor" stroke="none" />
          </Svg>
        </button>
        <button aria-label="Trier" className={`${CELL} bg-[#eeeff0] text-[#0a7cff]`}>
          <Svg w={12} h={14}>
            <path d="M0 5.500L4 1.500l4 4zM3 5h3v2H3zM4 9l4 4 4-4zM7 7.500h3v2H7z" fill="currentColor" stroke="none" />
          </Svg>
        </button>
      </div>
      <nav aria-label="Catégories d'outils" className="flex">
        <button className={`${SECTION} flex items-center justify-between bg-[#f5f5f5] pr-2 pl-[9px] text-[#0a7cff]`}>
          Favoris
          <Svg w={14} h={14}>
            <path d="M7 0l1.700 5H14L9.700 8.200 11.300 13.500 7 10.300 2.700 13.500 4.300 8.200 0 5h5.300z" fill="currentColor" stroke="none" />
          </Svg>
        </button>
        <button className={SECTION}>Période</button>
        <button className={SECTION}>Outils De Dessin</button>
        <button className={SECTION}>Indicateurs</button>
        <button className={SECTION}>Figures</button>
      </nav>
      <div className="flex flex-1 justify-end pl-[26px] text-[#666]">
        <button aria-label="Ajuster l'échelle" className={`${CELL} border-l`}>
          <Svg w={14} h={14}>
            <path d="M7 0v7M3.500 3.500h7" strokeWidth="2" />
            <path d="M4 8l-3 3 3 3M10 8l3 3-3 3M1 11h4M9 11h4" strokeWidth="1.500" />
          </Svg>
        </button>
        <button aria-label="Zoom arrière" className={CELL}>
          <Svg w={10} h={10}>
            <path d="M0 5h10" strokeWidth="2" />
          </Svg>
        </button>
        <button aria-label="Zoom avant" className={CELL}>
          <Svg w={10} h={10}>
            <path d="M0 5h10M5 0v10" strokeWidth="1.600" />
          </Svg>
        </button>
        <button aria-label="Réticule" className={`${CELL} bg-[#eeeff0] text-[#0a7cff]`}>
          <Svg w={13} h={13}>
            <path d="M0 6.500h5M6 6.500h1M8 6.500h5M6.500 0v5M6.500 8v5" strokeWidth="1.200" />
          </Svg>
        </button>
        <button aria-label="Échelle verticale" className="flex w-7 items-center justify-center bg-[#eeeff0] text-[#0a7cff]">
          <Svg w={13} h={13}>
            <path d="M0 6.500h13M6.500 0v5M6.500 8v5M4.500 2.500l2-2 2 2M4.500 10.500l2 2 2-2" />
          </Svg>
        </button>
      </div>
    </footer>
  );
}

export default function App() {
  return (
    <div className="flex h-screen flex-col overflow-hidden bg-[#eeeff0] font-['Liberation_Sans',Arial,sans-serif]">
      <Header />
      <PageTabs />
      <ChartTabs />
      <Toolbar />
      <TimeAxis />
      <main className="mx-px flex min-h-0 flex-1 bg-[#e7edec]">
        <div className="mb-[3px] min-w-0 flex-1 border-r-2 border-[#dcdedd] bg-linear-to-b from-[#fafafa] to-white">
          <Plot />
        </div>
        <PriceAxis />
      </main>
      <Palette />
      <BottomBar />
    </div>
  );
}
